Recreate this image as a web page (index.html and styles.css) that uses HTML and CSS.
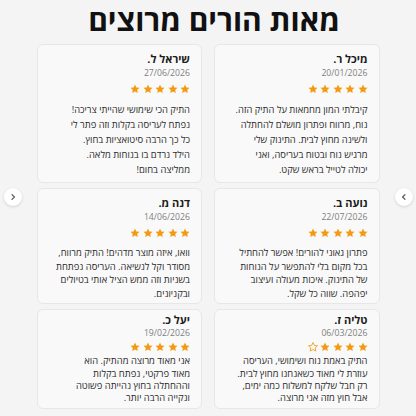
FILE: index.html
```html
<!DOCTYPE html>
<html lang="he" dir="rtl">
<head>
<meta charset="utf-8">
<title>מאות הורים מרוצים</title>
<link rel="stylesheet" href="styles.css">
</head>
<body>
<svg class="defs" aria-hidden="true">
  <defs>
    <path id="star" d="M6 0.6 L7.6 4.1 L11.4 4.5 L8.6 7.1 L9.4 10.9 L6 9 L2.6 10.9 L3.4 7.1 L0.6 4.5 L4.4 4.1 Z"/>
  </defs>
</svg>
<section class="reviews">
  <h1 class="reviews-title">מאות הורים מרוצים</h1>
  <div class="carousel">
    <button class="nav nav-prev" aria-label="הקודם">
      <svg viewBox="0 0 10 10" width="10" height="10"><path d="M6 2.6 L3.6 5 L6 7.4" fill="none" stroke="#555" stroke-width="1.2" stroke-linecap="round" stroke-linejoin="round"/></svg>
    </button>
    <div class="grid">
      <article class="card card-tall">
        <h3 class="name">מיכל ר.</h3>
        <div class="date">20/01/2026</div>
        <div class="stars">
          <svg class="star" viewBox="0 0 12 12"><use href="#star"/></svg>
          <svg class="star" viewBox="0 0 12 12"><use href="#star"/></svg>
          <svg class="star" viewBox="0 0 12 12"><use href="#star"/></svg>
          <svg class="star" viewBox="0 0 12 12"><use href="#star"/></svg>
          <svg class="star" viewBox="0 0 12 12"><use href="#star"/></svg>
        </div>
        <p class="text">קיבלתי המון מחמאות על התיק הזה.<br>נוח, מרווח ופתרון מושלם להחתלה<br>ולשינה מחוץ לבית. התינוק שלי<br>מרגיש נוח ובטוח בעריסה, ואני<br>יכולה לטייל בראש שקט.</p>
      </article>
      <article class="card card-tall">
        <h3 class="name">שיראל ל.</h3>
        <div class="date">27/06/2026</div>
        <div class="stars">
          <svg class="star" viewBox="0 0 12 12"><use href="#star"/></svg>
          <svg class="star" viewBox="0 0 12 12"><use href="#star"/></svg>
          <svg class="star" viewBox="0 0 12 12"><use href="#star"/></svg>
          <svg class="star" viewBox="0 0 12 12"><use href="#star"/></svg>
          <svg class="star" viewBox="0 0 12 12"><use href="#star"/></svg>
        </div>
        <p class="text">התיק הכי שימושי שהייתי צריכה!<br>נפתח לעריסה בקלות וזה פתר לי<br>כל כך הרבה סיטואציות בחוץ.<br>הילד נרדם בו בנוחות מלאה.<br>ממליצה בחום!</p>
      </article>
      <article class="card">
        <h3 class="name">נועה ב.</h3>
        <div class="date">22/07/2026</div>
        <div class="stars">
          <svg class="star" viewBox="0 0 12 12"><use href="#star"/></svg>
          <svg class="star" viewBox="0 0 12 12"><use href="#star"/></svg>
          <svg class="star" viewBox="0 0 12 12"><use href="#star"/></svg>
          <svg class="star" viewBox="0 0 12 12"><use href="#star"/></svg>
          <svg class="star" viewBox="0 0 12 12"><use href="#star"/></svg>
        </div>
        <p class="text">פתרון גאוני להורים! אפשר להחתיל<br>בכל מקום בלי להתפשר על הנוחות<br>של התינוק. איכות מעולה ועיצוב<br>יפהפה. שווה כל שקל.</p>
      </article>
      <article class="card">
        <h3 class="name">דנה מ.</h3>
        <div class="date">14/06/2026</div>
        <div class="stars">
          <svg class="star" viewBox="0 0 12 12"><use href="#star"/></svg>
          <svg class="star" viewBox="0 0 12 12"><use href="#star"/></svg>
          <svg class="star" viewBox="0 0 12 12"><use href="#star"/></svg>
          <svg class="star" viewBox="0 0 12 12"><use href="#star"/></svg>
          <svg class="star" viewBox="0 0 12 12"><use href="#star"/></svg>
        </div>
        <p class="text">וואו, איזה מוצר מדהים! התיק מרווח,<br>מסודר וקל לנשיאה. העריסה נפתחת<br>בשניות וזה ממש הציל אותי בטיולים<br>ובקניונים.</p>
      </article>
      <article class="card card-compact">
        <h3 class="name">טליה ז.</h3>
        <div class="date">06/03/2026</div>
        <div class="stars">
          <svg class="star" viewBox="0 0 12 12"><use href="#star"/></svg>
          <svg class="star" viewBox="0 0 12 12"><use href="#star"/></svg>
          <svg class="star" viewBox="0 0 12 12"><use href="#star"/></svg>
          <svg class="star" viewBox="0 0 12 12"><use href="#star"/></svg>
          <svg class="star star-empty" viewBox="0 0 12 12"><use href="#star"/></svg>
        </div>
        <p class="text">התיק באמת נוח ושימושי, העריסה<br>עוזרת לי מאוד כשאנחנו מחוץ לבית.<br>רק חבל שלקח למשלוח כמה ימים,<br>אבל חוץ מזה אני מרוצה.</p>
      </article>
      <article class="card card-compact">
        <h3 class="name">יעל כ.</h3>
        <div class="date">19/02/2026</div>
        <div class="stars">
          <svg class="star" viewBox="0 0 12 12"><use href="#star"/></svg>
          <svg class="star" viewBox="0 0 12 12"><use href="#star"/></svg>
          <svg class="star" viewBox="0 0 12 12"><use href="#star"/></svg>
          <svg class="star" viewBox="0 0 12 12"><use href="#star"/></svg>
          <svg class="star" viewBox="0 0 12 12"><use href="#star"/></svg>
        </div>
        <p class="text">אני מאוד מרוצה מהתיק. הוא<br>מאוד פרקטי, נפתח בקלות<br>וההחתלה בחוץ נהייתה פשוטה<br>ונקייה הרבה יותר.</p>
      </article>
    </div>
    <button class="nav nav-next" aria-label="הבא">
      <svg viewBox="0 0 10 10" width="10" height="10"><path d="M4 2.6 L6.4 5 L4 7.4" fill="none" stroke="#555" stroke-width="1.2" stroke-linecap="round" stroke-linejoin="round"/></svg>
    </button>
  </div>
</section>
</body>
</html>
```

FILE: styles.css
```css
* {
  box-sizing: border-box;
}

html, body {
  margin: 0;
  padding: 0;
}

body {
  background: #f4f4f4;
  font-family: "Open Sans", "Liberation Sans", sans-serif;
  color: #222;
  width: 416px;
  height: 416px;
  overflow: hidden;
}

.defs {
  position: absolute;
  width: 0;
  height: 0;
}

.reviews {
  display: flex;
  flex-direction: column;
  align-items: center;
}

.reviews-title {
  margin: 0 0 4px;
  padding-left: 12px;
  font-size: 30px;
  line-height: 40px;
  font-weight: 700;
  color: #111;
}

.carousel {
  position: relative;
  width: 416px;
  display: flex;
  justify-content: center;
}

.grid {
  width: 343px;
  display: grid;
  grid-template-columns: 1fr 1fr;
  column-gap: 12px;
  row-gap: 5px;
}

/* review card */
.card {
  background: #f9f9f9;
  border: 1px solid #e7e7e7;
  border-radius: 6px;
  padding: 6.5px 11px 3px;
}

.name {
  margin: 0;
  font-size: 11px;
  line-height: 14px;
  font-weight: 700;
  color: #1c1c1c;
}

.date {
  font-size: 8.7px;
  line-height: 14px;
  color: #808080;
}

.stars {
  margin-top: 3.5px;
  height: 12px;
  display: flex;
  gap: 2.4px;
  align-items: center;
}

.star {
  width: 10px;
  height: 10px;
  fill: #f39a12;
}

.star-empty {
  fill: none;
  stroke: #f39a12;
  stroke-width: 1;
}

.text {
  margin: 7px 0 0;
  font-size: 9.4px;
  line-height: 13.6px;
  color: #2b2b2b;
}

/* first row has roomier lines */
.card-tall {
  padding-bottom: 5px;
}

.card-tall .text {
  line-height: 15px;
}

/* last row sits tighter */
.card-compact {
  padding-top: 3px;
}

.card-compact .date {
  line-height: 12px;
}

.card-compact .stars {
  margin-top: 2px;
}

.card-compact .text {
  margin-top: 2px;
  line-height: 12.3px;
}

/* carousel arrows */
.nav {
  position: absolute;
  top: 144px;
  width: 18px;
  height: 18px;
  border-radius: 50%;
  border: none;
  padding: 0;
  background: #fff;
  box-shadow: 0 1px 3px rgba(0, 0, 0, 0.14);
  display: flex;
  align-items: center;
  justify-content: center;
}

.nav-prev {
  right: 3px;
}

.nav-next {
  left: 4px;
}
```
